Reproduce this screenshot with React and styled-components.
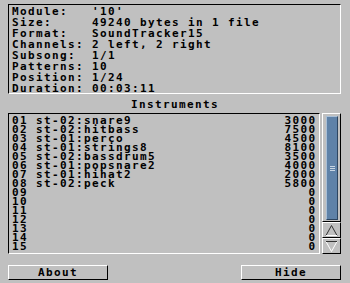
import React from 'react';
import styled, { createGlobalStyle } from 'styled-components';

const GlobalStyle = createGlobalStyle`
  html, body {
    margin: 0;
    padding: 0;
    background: #c0c0c0;
  }
  body {
    font-family: "DejaVu Sans Mono", "Liberation Mono", monospace;
    font-weight: bold;
    font-size: 11px;
    letter-spacing: 1.38px;
    color: #000;
  }
`;

const Window = styled.div`
  width: 350px;
  height: 283px;
  box-sizing: border-box;
  padding: 4px 9px 0 8px;
  display: flex;
  flex-direction: column;
  background: #c0c0c0;
`;

const Sunken = styled.div`
  box-sizing: border-box;
  border-style: solid;
  border-width: 1px;
  border-color: #000 #fff #fff #000;
`;

const InfoPanel = styled(Sunken)`
  height: 90px;
  padding: 1px 3px 0 3px;
`;

const InfoRow = styled.div`
  display: grid;
  grid-template-columns: 80px 1fr;
  height: 11px;
  line-height: 11px;
  white-space: pre;
`;

const SectionTitle = styled.div`
  height: 19px;
  margin: 0 -9px 0 -8px;
  text-align: center;
  line-height: 11px;
  padding-top: 5px;
  box-sizing: border-box;
`;

const ListArea = styled.div`
  display: flex;
  gap: 2px;
  height: 141px;
`;

const ListBox = styled(Sunken)`
  width: 313px;
  padding: 2px 4px 0 3px;
`;

const ListRow = styled.div`
  display: flex;
  height: 9px;
  line-height: 9px;
  white-space: pre;
`;

const Num = styled.span`
  width: 24px;
`;

const Name = styled.span`
  flex: 1;
`;

const Value = styled.span`
  text-align: right;
  margin-right: -1.38px;
`;

const ScrollColumn = styled.div`
  width: 19px;
  display: flex;
  flex-direction: column;
`;

const Raised = styled.div`
  box-sizing: border-box;
  border-style: solid;
  border-width: 1px;
  border-color: #fff #000 #000 #fff;
`;

const Track = styled(Raised)`
  flex: 1;
  padding: 2px 2px 1px 3px;
  display: flex;
`;

const Knob = styled.div`
  flex: 1;
  box-sizing: border-box;
  background: #5f82a8;
  border-style: solid;
  border-width: 1px;
  border-color: #a9bfd6 #2d4560 #2d4560 #a9bfd6;
  display: flex;
  align-items: center;
  justify-content: center;
`;

const Arrow = styled(Raised)`
  height: 16px;
  display: flex;
  align-items: center;
  justify-content: center;
`;

const ButtonBar = styled.div`
  display: flex;
  justify-content: space-between;
  margin-top: 11px;
`;

const Button = styled(Raised)`
  width: 100px;
  height: 15px;
  line-height: 13px;
  text-align: center;
`;

const info = [
  ['Module:', "'10'"],
  ['Size:', '49240 bytes in 1 file'],
  ['Format:', 'SoundTracker15'],
  ['Channels:', '2 left, 2 right'],
  ['Subsong:', '1/1'],
  ['Patterns:', '10'],
  ['Position:', '1/24'],
  ['Duration:', '00:03:11'],
];

const instruments = [
  ['01', 'st-02:snare9', 3000],
  ['02', 'st-02:hitbass', 7500],
  ['03', 'st-01:perco', 4500],
  ['04', 'st-01:strings8', 8100],
  ['05', 'st-02:bassdrum5', 3500],
  ['06', 'st-01:popsnare2', 4000],
  ['07', 'st-01:hihat2', 2000],
  ['08', 'st-02:peck', 5800],
  ['09', '', 0],
  ['10', '', 0],
  ['11', '', 0],
  ['12', '', 0],
  ['13', '', 0],
  ['14', '', 0],
  ['15', '', 0],
];

const Grip = () => (
  <svg width="5" height="5" viewBox="0 0 5 5">
    <rect x="0" y="0" width="5" height="1" fill="#c8d6e4" />
    <rect x="0" y="2" width="5" height="1" fill="#c8d6e4" />
    <rect x="0" y="4" width="5" height="1" fill="#c8d6e4" />
  </svg>
);

const UpArrow = () => (
  <svg width="13" height="11" viewBox="0 0 13 11">
    <path d="M1 10.5 L6.5 0.5 L12 10.5" fill="none" stroke="#333" strokeWidth="1" />
    <path d="M1 10.5 H12" stroke="#fff" strokeWidth="1" />
  </svg>
);

const DownArrow = () => (
  <svg width="13" height="11" viewBox="0 0 13 11">
    <path d="M1 0.5 L6.5 10.5 L12 0.5" fill="none" stroke="#fff" strokeWidth="1" />
    <path d="M1 0.5 H12" stroke="#333" strokeWidth="1" />
  </svg>
);

export default function App() {
  return (
    <>
      <GlobalStyle />
      <Window>
        <InfoPanel>
          {info.map(([label, value]) => (
            <InfoRow key={label}>
              <span>{label}</span>
              <span>{value}</span>
            </InfoRow>
          ))}
        </InfoPanel>
        <SectionTitle>Instruments</SectionTitle>
        <ListArea>
          <ListBox>
            {instruments.map(([num, name, vol]) => (
              <ListRow key={num}>
                <Num>{num}</Num>
                <Name>{name}</Name>
                <Value>{vol}</Value>
              </ListRow>
            ))}
          </ListBox>
          <ScrollColumn>
            <Track>
              <Knob>
                <Grip />
              </Knob>
            </Track>
            <Arrow>
              <UpArrow />
            </Arrow>
            <Arrow>
              <DownArrow />
            </Arrow>
          </ScrollColumn>
        </ListArea>
        <ButtonBar>
          <Button>About</Button>
          <Button>Hide</Button>
        </ButtonBar>
      </Window>
    </>
  );
}
